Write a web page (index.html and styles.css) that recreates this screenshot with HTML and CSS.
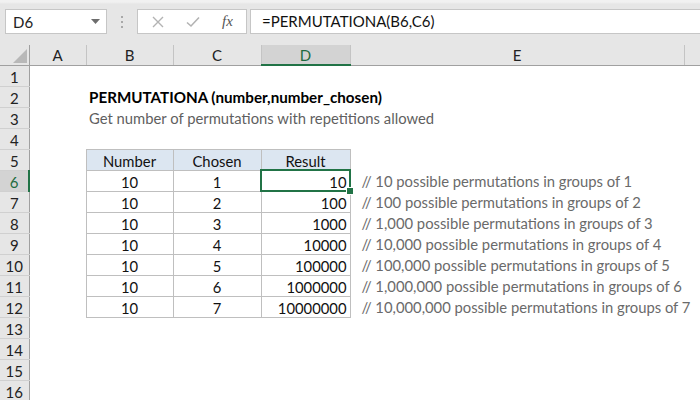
FILE: index.html
```html
<!DOCTYPE html>
<html>
<head>
<meta charset="utf-8">
<link rel="stylesheet" href="styles.css">
</head>
<body>
<div class="app">
  <div class="toolbar">
    <div class="namebox">
      <span class="name">D6</span>
      <svg class="caret" width="9" height="5" viewBox="0 0 9 5"><path d="M0 0h9L4.5 5z" fill="#6d6d6d"/></svg>
    </div>
    <div class="dots"><i></i><i></i><i></i></div>
    <div class="fbtns">
      <svg class="ico" width="12" height="12" viewBox="0 0 12 12"><path d="M1 1L11 11M11 1L1 11" stroke="#b3b3b3" stroke-width="1.4" fill="none"/></svg>
      <svg class="ico" width="14" height="12" viewBox="0 0 14 12"><path d="M1 6.5L5 10L13 1.5" stroke="#b3b3b3" stroke-width="1.6" fill="none"/></svg>
      <span class="fx">fx</span>
    </div>
    <div class="formula">=PERMUTATIONA(B6,C6)</div>
  </div>
  <table class="sheet">
    <colgroup>
      <col class="c-rh"><col class="c-a"><col class="c-b"><col class="c-c"><col class="c-d"><col class="c-e"><col class="c-f">
    </colgroup>
    <tr class="colhead">
      <th class="corner"><svg width="14" height="14" viewBox="0 0 14 14"><path d="M14 0V14H0z" fill="#b8b8b8"/></svg></th>
      <th>A</th><th>B</th><th>C</th><th class="hsel">D</th><th>E</th><th class="last"></th>
    </tr>
    <tr><th class="rh">1</th><td></td><td></td><td></td><td></td><td></td><td></td></tr>
    <tr><th class="rh">2</th><td></td><td class="title" colspan="3">PERMUTATIONA (number,number_chosen)</td><td></td><td></td></tr>
    <tr><th class="rh">3</th><td></td><td class="sub" colspan="4">Get number of permutations with repetitions allowed</td><td></td></tr>
    <tr><th class="rh">4</th><td></td><td></td><td></td><td></td><td></td><td></td></tr>
    <tr><th class="rh">5</th><td></td><td class="g hd">Number</td><td class="g hd">Chosen</td><td class="g hd">Result</td><td></td><td></td></tr>
    <tr><th class="rh rsel">6</th><td></td><td class="g ctr">10</td><td class="g ctr">1</td><td class="g num sel">10</td><td class="note">// 10 possible permutations in groups of 1</td><td></td></tr>
    <tr><th class="rh">7</th><td></td><td class="g ctr">10</td><td class="g ctr">2</td><td class="g num">100</td><td class="note">// 100 possible permutations in groups of 2</td><td></td></tr>
    <tr><th class="rh">8</th><td></td><td class="g ctr">10</td><td class="g ctr">3</td><td class="g num">1000</td><td class="note">// 1,000 possible permutations in groups of 3</td><td></td></tr>
    <tr><th class="rh">9</th><td></td><td class="g ctr">10</td><td class="g ctr">4</td><td class="g num">10000</td><td class="note">// 10,000 possible permutations in groups of 4</td><td></td></tr>
    <tr><th class="rh">10</th><td></td><td class="g ctr">10</td><td class="g ctr">5</td><td class="g num">100000</td><td class="note">// 100,000 possible permutations in groups of 5</td><td></td></tr>
    <tr><th class="rh">11</th><td></td><td class="g ctr">10</td><td class="g ctr">6</td><td class="g num">1000000</td><td class="note">// 1,000,000 possible permutations in groups of 6</td><td></td></tr>
    <tr><th class="rh">12</th><td></td><td class="g ctr">10</td><td class="g ctr">7</td><td class="g num">10000000</td><td class="note">// 10,000,000 possible permutations in groups of 7</td><td></td></tr>
    <tr><th class="rh">13</th><td></td><td></td><td></td><td></td><td></td><td></td></tr>
    <tr><th class="rh">14</th><td></td><td></td><td></td><td></td><td></td><td></td></tr>
    <tr><th class="rh">15</th><td></td><td></td><td></td><td></td><td></td><td></td></tr>
    <tr><th class="rh">16</th><td></td><td></td><td></td><td></td><td></td><td></td></tr>
  </table>
</div>
</body>
</html>
```
FILE: styles.css
```css
* { box-sizing: border-box; }
html, body { margin: 0; padding: 0; background: #fff; }
body { width: 700px; height: 400px; overflow: hidden; font-family: Lato, "Open Sans", sans-serif; font-size: 14.8px; color: #000; }

.app { width: 700px; }

.toolbar {
  height: 45px;
  background: linear-gradient(#f1f1f1 0, #f1f1f1 2px, #e6e6e6 4px, #e6e6e6 100%);
  display: flex;
  align-items: flex-start;
  padding-top: 9px;
  padding-left: 5px;
}
.namebox {
  width: 102px; height: 25px;
  background: #fff; border: 1px solid #c6c6c6;
  display: flex; align-items: center; justify-content: space-between;
  padding: 0 6px 0 7px;
}
.name { font-size: 15px; color: #222; }
.dots { width: 30px; height: 25px; display: flex; flex-direction: column; align-items: center; justify-content: center; gap: 3px; }
.dots i { width: 2px; height: 2px; background: #a8a8a8; display: block; }
.fbtns {
  width: 110px; height: 25px;
  background: #fff; border: 1px solid #c6c6c6;
  display: flex; align-items: center;
  padding-left: 14px; gap: 22px;
}
.fx { font-family: "Liberation Serif", serif; font-style: italic; font-size: 15px; color: #555; }
.formula {
  flex: 1; height: 25px; margin-left: 3px;
  background: #fff; border: 1px solid #c6c6c6; border-right: none;
  padding-left: 11px; line-height: 23px; font-size: 15px; color: #111;
}

.sheet { border-collapse: collapse; table-layout: fixed; width: 720px; }
.c-rh { width: 29px; }
.c-a { width: 57px; }
.c-b { width: 87px; }
.c-c { width: 88px; }
.c-d { width: 89px; }
.c-e { width: 334px; }
.c-f { width: 36px; }

.sheet tr { height: 21px; }
.sheet tr.colhead { height: 20px; }
.sheet td, .sheet th { padding: 0; white-space: nowrap; overflow: visible; font-weight: normal; vertical-align: top; }
.sheet td { line-height: 18px; padding-top: 2px; color: #111; }

.colhead th {
  background: #e6e6e6; color: #222;
  border-right: 1px solid #c4c4c4; border-bottom: 1px solid #a0a0a0;
  text-align: center; font-size: 15px; line-height: 18px; padding-top: 1px;
}
.colhead th.corner { border-right: 1px solid #a0a0a0; text-align: right; vertical-align: bottom; padding: 0 2px 2px 0; line-height: 0; }
.colhead th.last { border-right: none; }
.colhead th.hsel { background: #d3d3d3; color: #1e6b40; border-bottom: 2px solid #217346; }

.sheet th.rh {
  background: #e6e6e6; color: #222; text-align: center;
  border-right: 1px solid #a0a0a0; border-bottom: 1px solid #d0d0d0;
  font-size: 15px; line-height: 18px; padding-top: 2px;
}
.sheet th.rh.rsel { background: #d3d3d3; color: #1e6b40; border-right: 2px solid #217346; }

.sheet td.title { font-weight: bold; font-size: 15.2px; padding-left: 3px; color: #000; }
.sheet td.sub { color: #5f5f5f; padding-left: 3px; }
.sheet td.note { color: #6a6a6a; padding-left: 11px; }

.sheet td.g { border: 1px solid #bfbfbf; }
.sheet td.hd { background: #dce6f1; text-align: center; }
.sheet td.ctr { text-align: center; }
.sheet td.num { text-align: right; padding-right: 3px; }

.sel { position: relative; }
.sel::after {
  content: ""; position: absolute; left: -2px; top: -2px; right: -1px; bottom: -1px;
  border: 2px solid #217346;
}
.sel::before {
  content: ""; position: absolute; right: -4px; bottom: -4px; width: 6px; height: 6px;
  background: #217346; border: 1px solid #fff; z-index: 2;
}
```
